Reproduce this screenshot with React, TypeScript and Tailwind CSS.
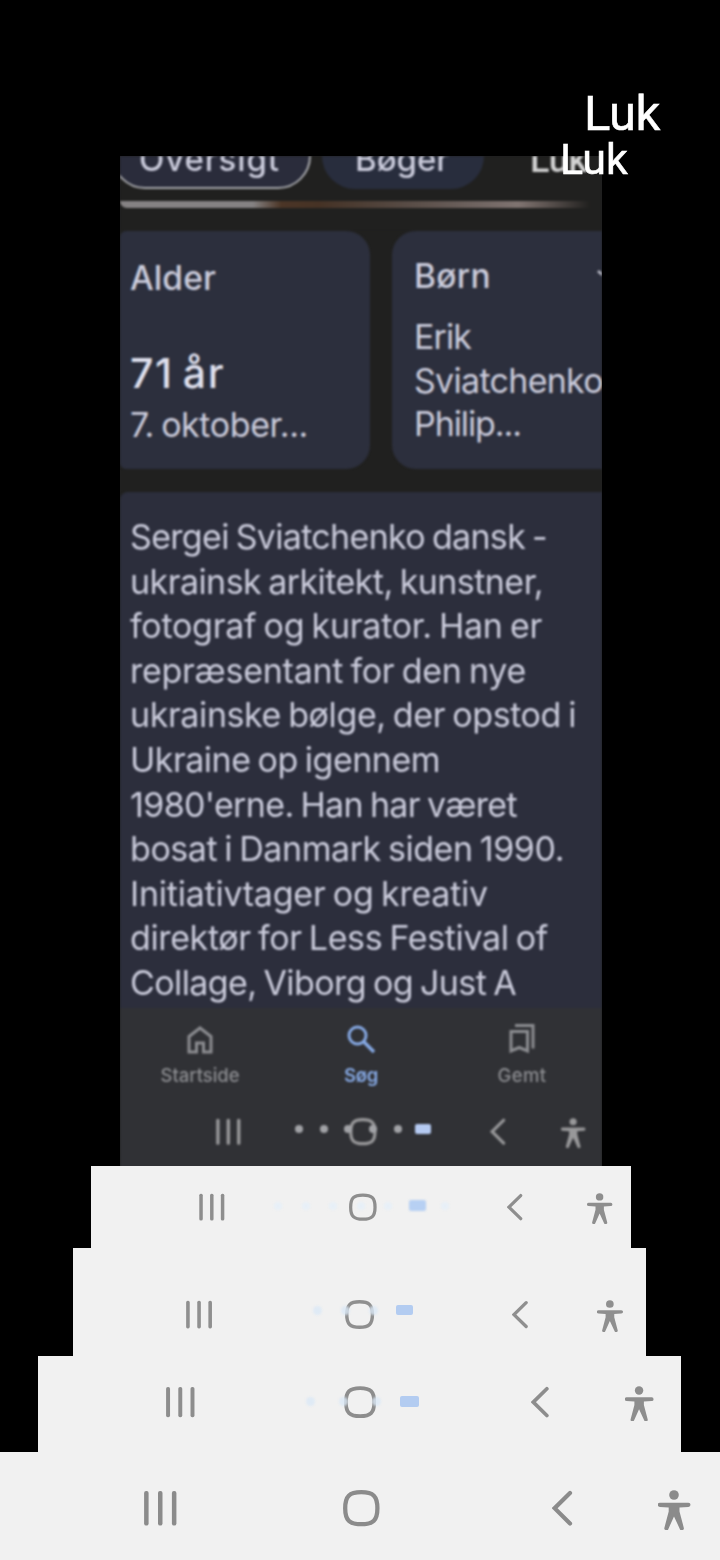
import React, { useLayoutEffect, useRef } from "react";
import clsx from "clsx";

type FitTextProps = {
  children: string;
  width: number;
  className?: string;
};

// Tracks a single line of text so that it fills the given width
const FitText = ({ children, width, className }: FitTextProps) => {
  const ref = useRef<HTMLSpanElement>(null);

  useLayoutEffect(() => {
    const el = ref.current;
    if (!el) return;
    el.style.letterSpacing = "0px";
    const natural = el.getBoundingClientRect().width;
    el.style.letterSpacing = `${(width - natural) / children.length}px`;
  }, [children, width]);

  return (
    <div className={clsx("whitespace-nowrap", className)}>
      <span ref={ref}>{children}</span>
    </div>
  );
};

const RecentsIcon = ({ className }: { className: string }) => (
  <svg viewBox="0 0 33 40" className={className} fill="currentColor">
    <rect x="0.1" y="1" width="4.5" height="34.5" rx="2" />
    <rect x="14" y="1" width="4.5" height="34.5" rx="2" />
    <rect x="27.9" y="1" width="4.5" height="34.5" rx="2" />
  </svg>
);

const HomeIcon = ({ className }: { className: string }) => (
  <svg viewBox="0 0 37 40" className={className} fill="none" stroke="currentColor">
    <path
      d="M18.3 2.2C30.3 2.2 34.4 6.2 34.4 18.2S30.3 34.2 18.3 34.2 2.2 30.2 2.2 18.2 6.3 2.2 18.3 2.2Z"
      strokeWidth="4.3"
    />
  </svg>
);

const BackIcon = ({ className }: { className: string }) => (
  <svg viewBox="0 0 21 40" className={className} fill="none" stroke="currentColor">
    <path d="M18 3 2.6 18.2 18 33.4" strokeWidth="4.2" strokeLinecap="round" />
  </svg>
);

const PersonIcon = ({ className }: { className: string }) => (
  <svg viewBox="0 0 33 40" className={className} fill="currentColor">
    <circle cx="16" cy="5" r="4.8" />
    <path d="M1.8 12.7H30.4a2 2 0 0 1 0 4.2L21.5 17.5V21.5L25.7 37.4a2 2 0 0 1-3.9 1.5L16 26.4 10.4 38.9a2 2 0 0 1-3.9-1.5L10.7 21.5V17.5L1.8 16.9a2 2 0 0 1 0-4.2Z" />
  </svg>
);

type NavBarProps = {
  className: string;
  recents: string;
  home: string;
  back: string;
  person: string;
  children?: React.ReactNode;
};

const NavBar = ({ className, recents, home, back, person, children }: NavBarProps) => (
  <div className={clsx("relative flex shrink-0 items-start *:shrink-0", className)}>
    <RecentsIcon className={recents} />
    <HomeIcon className={home} />
    <BackIcon className={back} />
    <PersonIcon className={person} />
    {children}
  </div>
);

type PagerProps = {
  className: string;
  dot: string;
  active: string;
  before: number;
  after?: number;
};

// Page indicator that shows through the navigation buttons
const Pager = ({ className, dot, active, before, after = 0 }: PagerProps) => (
  <div className={clsx("absolute left-0 flex items-center", className)}>
    {Array.from({ length: before }, (_, i) => (
      <span key={i} className={clsx("rounded-full", dot)} />
    ))}
    <span className={clsx("rounded-[2px]", active)} />
    {Array.from({ length: after }, (_, i) => (
      <span key={i} className={clsx("-ml-1 rounded-full", dot)} />
    ))}
  </div>
);

const BIO: [string, number][] = [
  ["Sergei Sviatchenko dansk -", 417],
  ["ukrainsk arkitekt, kunstner,", 413],
  ["fotograf og kurator. Han er", 412],
  ["repræsentant for den nye", 396],
  ["ukrainske bølge, der opstod i", 446],
  ["Ukraine op igennem", 310],
  ["1980'erne. Han har været", 387],
  ["bosat i Danmark siden 1990.", 434],
  ["Initiativtager og kreativ", 358],
  ["direktør for Less Festival of", 418],
  ["Collage, Viborg og Just A", 386],
];

const Chips = () => (
  <div className="h-[75px] bg-[#20201f]">
    <div className="flex h-[33px] items-end gap-[11px] overflow-hidden">
      <div className="-ml-2 h-[66px] w-[199px] shrink-0 rounded-[33px] border-[2.5px] border-[#a5a6aa] bg-[#2a2c3b] pt-[14px] pl-[25px]">
        <FitText width={141} className="text-[33px] leading-10 font-medium">Oversigt</FitText>
      </div>
      <div className="h-[66px] w-[162px] shrink-0 rounded-[33px] bg-[#282d3d] pt-4 pl-[33px]">
        <FitText width={94} className="text-[33px] leading-10 font-medium">Bøger</FitText>
      </div>
      <div className="ml-[35px] pb-[8px] font-[Roboto] text-[36px] leading-[42px] font-medium text-[#d2d2d2]">
        <FitText width={57}>Luk</FitText>
      </div>
    </div>
    <div className="mt-3 h-[7px] w-[475px] rounded-bl-lg bg-linear-to-r from-[#858283] from-28% via-[#4b3526] via-34% to-[#20201f] to-100%">
      <div className="ml-[200px] h-full bg-linear-to-r from-transparent from-0% via-[#807471] via-72% to-transparent to-98%" />
    </div>
  </div>
);

const Cards = () => (
  <div className="flex gap-[22px] overflow-hidden">
    <div className="h-[238px] w-[250px] shrink-0 rounded-r-[24px] rounded-l-[6px] bg-[#2c2f3d] pt-[27px] pl-2.5">
      <FitText width={86} className="text-[33.5px] leading-10 font-medium">Alder</FitText>
      <FitText width={95} className="mt-[51px] text-[41px] leading-[48px] font-medium text-[#dfe0ee] [word-spacing:-3px]">71 år</FitText>
      <FitText width={178} className="mt-[6px] text-[34px] leading-11 [word-spacing:-2px]">7. oktober...</FitText>
    </div>
    <div className="relative h-[238px] w-[230px] shrink-0 rounded-l-[24px] bg-[#2c2f3d] pt-[25px] pl-[22px]">
      <FitText width={77} className="text-[33.5px] leading-10 font-medium">Børn</FitText>
      <div className="mt-[19px] text-[34px] leading-[43.6px]">
        <FitText width={57}>Erik</FitText>
        <FitText width={189}>Sviatchenko</FitText>
        <FitText width={107}>Philip...</FitText>
      </div>
      <svg viewBox="0 0 16 10" className="absolute top-[38px] left-[205px] h-2.5 w-4" fill="none" stroke="#b9bac7" strokeWidth="2.8">
        <path d="M1 2 8 8 15 2" />
      </svg>
    </div>
  </div>
);

const Tabs = () => (
  <div className="flex h-[92px] bg-[#303135] text-[18.5px] leading-6 font-medium text-[#8b8c90]">
    <div className="flex w-40 flex-col items-center gap-[9px] pt-[18px]">
      <svg viewBox="0 0 26 28" className="h-7 w-[26px]" fill="none" stroke="currentColor" strokeWidth="3">
        <path d="M2 10.5 13 2 24 10.5V26H16.5V17H9.5V26H2Z" />
      </svg>
      <FitText width={79}>Startside</FitText>
    </div>
    <div className="flex w-[162px] flex-col items-center gap-[9px] pt-[17px] text-[#86a9e4]">
      <svg viewBox="0 0 28 29" className="h-[29px] w-7" fill="none" stroke="currentColor" strokeWidth="3">
        <circle cx="10.5" cy="10.5" r="8.5" />
        <path d="M16.5 16.5 27 27" strokeWidth="3.5" />
      </svg>
      <FitText width={34} className="font-semibold">Søg</FitText>
    </div>
    <div className="flex w-40 flex-col items-center gap-[9px] pt-[15px]">
      <svg viewBox="0 0 26 31" className="h-[31px] w-[26px]" fill="none" stroke="currentColor" strokeWidth="3">
        <path d="M2 8.5H18.5V28L10.25 24.5 2 28Z" />
        <path d="M6 2.5H24V25.5" />
      </svg>
      <FitText width={49}>Gemt</FitText>
    </div>
  </div>
);

const Phone = () => (
  <div className="ml-[120px] h-[1010px] w-[482px] shrink-0 overflow-hidden bg-[#20201f] font-[Inter] text-[#cbccdc]">
    <div className="blur-[1px]">
      <Chips />
      <Cards />
      <div className="mt-[23px] h-[516px] rounded-tl-[8px] bg-[#2c2e3c] pt-[23px] pl-2.5 text-[34px] leading-[44.6px] [word-spacing:-2px]">
        {BIO.map(([line, width]) => (
          <FitText key={line} width={width}>{line}</FitText>
        ))}
      </div>
      <Tabs />
      <NavBar
        className="h-[72px] bg-[#303135] pt-[18px] text-[#98989a]"
        recents="ml-24 h-[30px] w-[25px]"
        home="ml-[108px] h-[30px] w-7"
        back="ml-[113px] h-[30px] w-4"
        person="ml-[55px] h-[30px] w-[25px]"
      >
        <Pager
          className="top-6 gap-[16.7px] pl-[175px]"
          dot="size-2 bg-[#a2a3a7]"
          active="-ml-[3px] h-[10px] w-4 bg-[#b5caf2]"
          before={5}
        />
      </NavBar>
    </div>
  </div>
);

export default function App() {
  return (
    <div className="relative flex h-[1560px] w-[720px] flex-col overflow-hidden bg-black font-[Inter]">
      <div className="flex h-[156px] shrink-0 justify-end pt-[86px] pr-[60px]">
        <FitText width={76} className="font-[Roboto] text-[49px] leading-[56px] text-white [-webkit-text-stroke:0.5px_white]">Luk</FitText>
      </div>
      <Phone />

      <NavBar
        className="ml-[91px] h-[82px] w-[540px] bg-[#f1f1f1] pt-[26.5px] text-[#8e8e8e]"
        recents="ml-[108px] h-[31px] w-[26px] blur-[0.7px]"
        home="ml-[124px] h-[31px] w-7 blur-[0.7px]"
        back="ml-[129.5px] h-[31px] w-4 blur-[0.7px]"
        person="ml-[64px] h-[31px] w-[26px] blur-[0.7px]"
      >
        <Pager
          className="top-[34px] gap-[19.5px] pl-[183px] blur-[1px]"
          dot="size-2 bg-[#e7eff7]"
          active="-ml-[3px] h-[11px] w-[17px] bg-[#b7d0f3]"
          before={5}
          after={1}
        />
      </NavBar>

      <NavBar
        className="ml-[73px] h-[108px] w-[573px] bg-[#f1f1f1] pt-[51.5px] text-[#8f8f8f]"
        recents="ml-[113px] h-8 w-[26.5px]"
        home="ml-[132.5px] h-8 w-[29.5px]"
        back="ml-[137.5px] h-8 w-[16.5px]"
        person="ml-[68.5px] h-8 w-[26.5px]"
      >
        <Pager
          className="top-[57px] gap-[19px] pl-[240px]"
          dot="size-[9px] bg-[#dbe8f6]/80 blur-[1px]"
          active="-ml-px h-[10px] w-[17px] bg-[#b3ccf1]"
          before={3}
        />
      </NavBar>

      <NavBar
        className="ml-[38px] h-24 w-[643px] bg-[#f1f1f1] pt-[29.7px] text-[#8d8d8d]"
        recents="ml-[128px] h-[35.5px] w-[29px]"
        home="ml-[149.3px] h-[35.5px] w-[32.5px]"
        back="ml-[154.2px] h-[35.5px] w-[18.5px]"
        person="ml-[75.5px] h-[35.5px] w-[29px]"
      >
        <Pager
          className="top-10 gap-6 pl-[268px]"
          dot="size-[9px] bg-[#dbe8f6]/80 blur-[1px]"
          active="-ml-[5px] h-[11px] w-[19px] bg-[#b3ccf1]"
          before={3}
        />
      </NavBar>

      <NavBar
        className="h-[108px] bg-[#f1f1f1] pt-[38px] text-[#8b8b8b]"
        recents="ml-[143.5px] h-10 w-[33px]"
        home="ml-[166.5px] h-10 w-[37px]"
        back="ml-[172px] h-10 w-[21px]"
        person="ml-[85px] h-10 w-[33px]"
      />

      {/* Close button of the layer above the phone */}
      <div className="absolute top-[134px] left-[560px] font-[Roboto] text-[43px] leading-[50px] text-white [-webkit-text-stroke:0.5px_white]">
        <FitText width={68}>Luk</FitText>
      </div>
    </div>
  );
}
